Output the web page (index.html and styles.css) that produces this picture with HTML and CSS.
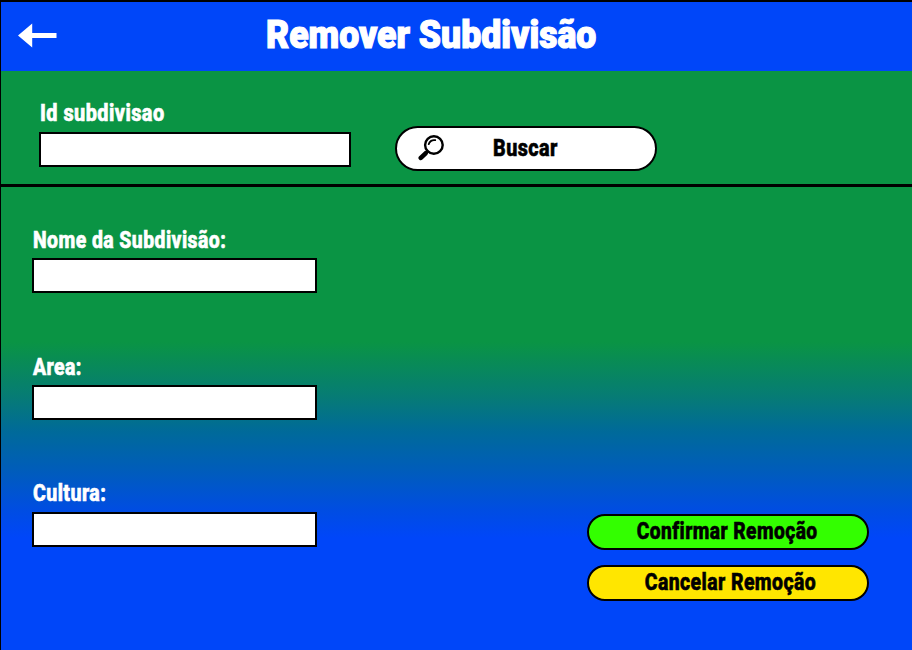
FILE: index.html
```html
<!DOCTYPE html>
<html lang="pt">
<head>
<meta charset="utf-8">
<title>Remover Subdivisão</title>
<link rel="stylesheet" href="styles.css">
</head>
<body>
<main class="page">
  <header class="header">
    <svg class="back" width="40" height="26" viewBox="0 0 40 26"><path d="M0 13.500 14.200 1.500v9.500H38.500v5H14.200V25.500z" fill="#fff"/></svg>
    <h1 class="title"><span>Remover Subdivisão</span></h1>
  </header>
  <section class="search">
    <label class="field search-field"><span class="label id-label">Id subdivisao</span><input class="box"></label>
    <button class="btn search-btn">
      <svg class="lens" width="26" height="26" viewBox="0 0 26 26" fill="none" stroke="#000" stroke-linecap="round"><circle cx="15.900" cy="10" r="8.800" stroke-width="2.400"/><path d="M10.700 9.200A5.500 5.500 0 0 1 17.200 5.200" stroke-width="1.800"/><path d="M9.300 16.500 7.800 18" stroke-width="3"/><path d="M7.600 18.300 2.800 22.900" stroke-width="4.600"/></svg>
      <span class="text buscar">Buscar</span>
    </button>
  </section>
  <section class="details">
    <div class="fields">
      <label class="field"><span class="label nome">Nome da Subdivisão:</span><input class="box"></label>
      <label class="field"><span class="label area">Area:</span><input class="box"></label>
      <label class="field"><span class="label cultura">Cultura:</span><input class="box"></label>
    </div>
    <div class="actions">
      <button class="btn confirm"><span class="text confirm-text">Confirmar Remoção</span></button>
      <button class="btn cancel"><span class="text cancel-text">Cancelar Remoção</span></button>
    </div>
  </section>
</main>
</body>
</html>
```
FILE: styles.css
```css
* { box-sizing: border-box; }
body { margin: 0; font-family: Roboto, "Liberation Sans", sans-serif; }
.page {
  width: 912px; height: 650px; overflow: hidden;
  border-top: 2px solid #000; border-left: 1px solid #000;
  background: linear-gradient(#0a9444 0, #0a9444 340px, #067b76 396px, #006a9a 430px, #005cbc 470px, #004de2 508px, #0046f9 536px);
}
.header { display: flex; align-items: center; height: 69px; padding-left: 17px; background: #0046f9; }
.back { display: block; margin-bottom: 3px; }
.title { margin: 0 0 4px 208px; color: #fff; font-size: 38.5px; line-height: 46px; font-weight: 900; white-space: nowrap; -webkit-text-stroke: 1.2px #fff; }
.title span { display: inline-block; transform-origin: 0 50%; transform: scaleX(.924); }
.search { display: flex; height: 116px; padding-left: 38px; border-bottom: 3px solid #000; }
.field { display: flex; flex-direction: column; align-items: flex-start; }
.label, .text { font-size: 23px; line-height: 28px; font-weight: 800; letter-spacing: .5px; white-space: nowrap; transform: scaleX(.85); -webkit-text-stroke: .6px currentColor; }
.label { color: #fff; padding-top: 1px; margin-bottom: -1px; margin-left: 1px; transform-origin: 0 50%; }
.id-label { transform: scaleX(.866); }
.nome, .area { padding-top: 2px; margin-bottom: -2px; transform: scaleX(.845); }
.box { display: block; width: 285px; height: 35px; margin: 5px 0 0; padding: 4px 8px; border: 2px solid #000; border-radius: 0; background: #fff; outline: 0; }
.search-field { padding-top: 28px; }
.search-field .box { width: 312px; }
.btn { display: flex; align-items: center; justify-content: center; margin: 0; padding: 0; border: 2px solid #000; border-radius: 23px; font-family: inherit; color: #000; }
.search-btn { width: 262px; height: 45px; margin: 54.500px 0 0 44px; justify-content: flex-start; background: #fff; }
.lens { margin-left: 21px; }
.text { padding-top: 1px; }
.buscar { margin-left: 48.500px; transform-origin: 0 50%; transform: scaleX(.86); }
.details { display: flex; padding: 38.400px 43px 0 31px; justify-content: space-between; }
.fields { display: flex; flex-direction: column; gap: 58.600px; }
.actions { display: flex; flex-direction: column; gap: 15px; padding-top: 288.600px; }
.confirm, .cancel { width: 282px; height: 36px; }
.confirm { background: #3f0; }
.confirm-text { transform: translateX(-1px) scaleX(.836); }
.cancel-text { transform: translateX(2px) scaleX(.845); }
.cancel { background: #ffe600; }
```
